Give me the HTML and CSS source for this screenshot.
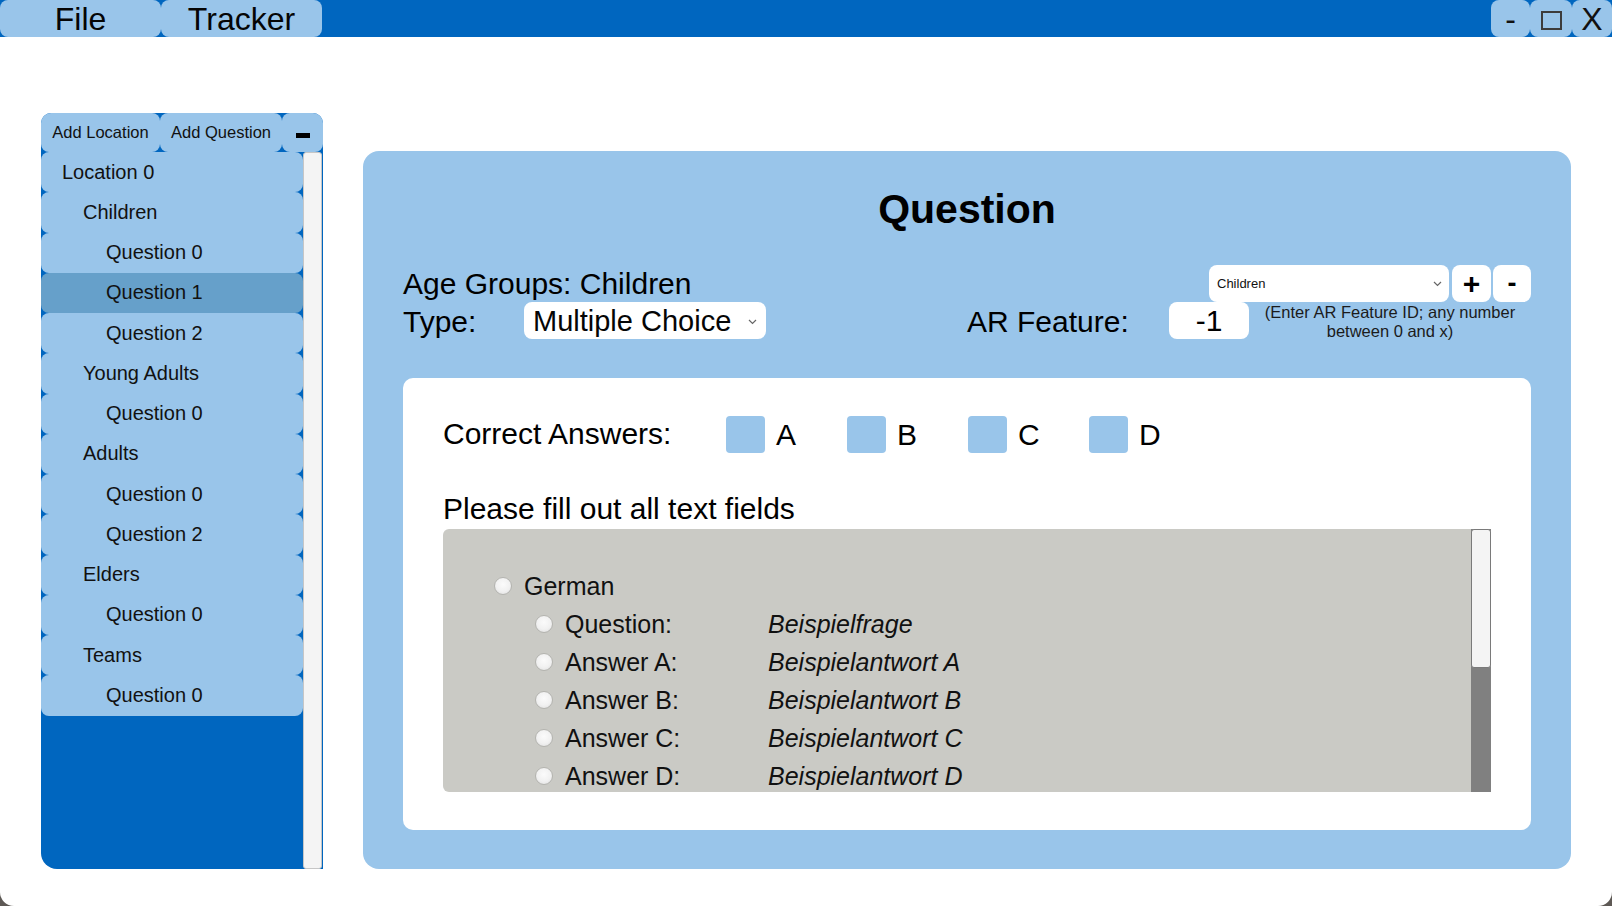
FILE: index.html
```html
<!DOCTYPE html>
<html lang="en">
<head>
<meta charset="utf-8">
<title>Tracker</title>
<link rel="stylesheet" href="styles.css">
</head>
<body>
<div class="window">
  <header class="titlebar">
    <nav class="menu">
      <div class="menu-btn">File</div>
      <div class="menu-btn">Tracker</div>
    </nav>
    <div class="win-controls">
      <div class="win-btn win-min">-</div>
      <div class="win-btn win-max"><span class="max-box"></span></div>
      <div class="win-btn win-close">X</div>
    </div>
  </header>

  <div class="workspace">
    <aside class="tree-panel">
      <div class="tree-toolbar">
        <div class="tool-btn tool-loc">Add Location</div>
        <div class="tool-btn tool-q">Add Question</div>
        <div class="tool-btn tool-minus"><span class="minus-bar"></span></div>
      </div>
      <div class="tree-body">
        <div class="tree-list">
          <div class="tree-item lvl0">Location 0</div>
          <div class="tree-item lvl1">Children</div>
          <div class="tree-item lvl2">Question 0</div>
          <div class="tree-item lvl2 selected">Question 1</div>
          <div class="tree-item lvl2">Question 2</div>
          <div class="tree-item lvl1">Young Adults</div>
          <div class="tree-item lvl2">Question 0</div>
          <div class="tree-item lvl1">Adults</div>
          <div class="tree-item lvl2">Question 0</div>
          <div class="tree-item lvl2">Question 2</div>
          <div class="tree-item lvl1">Elders</div>
          <div class="tree-item lvl2">Question 0</div>
          <div class="tree-item lvl1">Teams</div>
          <div class="tree-item lvl2">Question 0</div>
        </div>
        <div class="tree-scroll"></div>
      </div>
    </aside>

    <main class="question-panel">
      <h1 class="heading">Question</h1>
      <div class="meta">
        <div class="meta-row">
          <div class="big-label">Age Groups: Children</div>
          <div class="age-tools">
            <div class="small-select">
              <span>Children</span>
              <svg class="chev" width="9" height="6" viewBox="0 0 9 6"><polyline points="1,1 4.5,4.5 8,1" fill="none" stroke="#666" stroke-width="1.2"/></svg>
            </div>
            <div class="icon-btn plus">+</div>
            <div class="icon-btn minus">-</div>
          </div>
        </div>
        <div class="meta-row row2">
          <div class="big-label type-label">Type:</div>
          <div class="type-select">
            <span>Multiple Choice</span>
            <svg class="chev" width="9" height="6" viewBox="0 0 9 6"><polyline points="1,1 4.5,4.5 8,1" fill="none" stroke="#666" stroke-width="1.2"/></svg>
          </div>
          <div class="big-label ar-label">AR Feature:</div>
          <div class="ar-input">-1</div>
          <div class="hint">(Enter AR Feature ID; any number<br>between 0 and x)</div>
        </div>
      </div>

      <section class="card">
        <div class="answers">
          <div class="big-label answers-label">Correct Answers:</div>
          <div class="answer"><span class="checkbox"></span><span class="big-label">A</span></div>
          <div class="answer"><span class="checkbox"></span><span class="big-label">B</span></div>
          <div class="answer"><span class="checkbox"></span><span class="big-label">C</span></div>
          <div class="answer"><span class="checkbox"></span><span class="big-label">D</span></div>
        </div>
        <div class="instructions">Please fill out all text fields</div>
        <div class="lang-box">
          <div class="lang-content">
            <div class="lang-row lang-head"><span class="radio"></span><span>German</span></div>
            <div class="lang-row sub"><span class="radio"></span><span class="field-label">Question:</span><span class="field-value">Beispielfrage</span></div>
            <div class="lang-row sub"><span class="radio"></span><span class="field-label">Answer A:</span><span class="field-value">Beispielantwort A</span></div>
            <div class="lang-row sub"><span class="radio"></span><span class="field-label">Answer B:</span><span class="field-value">Beispielantwort B</span></div>
            <div class="lang-row sub"><span class="radio"></span><span class="field-label">Answer C:</span><span class="field-value">Beispielantwort C</span></div>
            <div class="lang-row sub"><span class="radio"></span><span class="field-label">Answer D:</span><span class="field-value">Beispielantwort D</span></div>
          </div>
          <div class="lang-scroll"><div class="lang-thumb"></div></div>
        </div>
      </section>
    </main>
  </div>
</div>
</body>
</html>
```

FILE: styles.css
```css
* { box-sizing: border-box; }

html, body {
  margin: 0;
  padding: 0;
}

body {
  background: #5e5955;
  font-family: "Liberation Sans", Arial, sans-serif;
  color: #000;
}

.window {
  width: 1612px;
  height: 906px;
  background: #fff;
  border-radius: 0 0 14px 14px;
  overflow: hidden;
  display: flex;
  flex-direction: column;
}

/* ---------- title bar ---------- */
.titlebar {
  flex: none;
  height: 37px;
  background: #0066bf;
  display: flex;
  justify-content: space-between;
}

.menu { display: flex; }

.menu-btn {
  width: 161px;
  height: 37px;
  background: #99c5ea;
  border-radius: 8px;
  font-size: 32px;
  line-height: 32px;
  display: flex;
  align-items: center;
  justify-content: center;
  color: #050505;
}

.win-controls { display: flex; }

.win-btn {
  height: 37px;
  background: #99c5ea;
  border-radius: 8px;
  font-size: 32px;
  line-height: 32px;
  display: flex;
  align-items: center;
  justify-content: center;
  color: #111;
}

.win-min { width: 39px; }
.win-max { width: 42px; }
.win-close { width: 40px; }

.max-box {
  width: 21px;
  height: 19px;
  border: 2px solid #3c3c3c;
  margin-top: 3px;
}

/* ---------- workspace ---------- */
.workspace {
  flex: 1;
  min-height: 0;
  display: flex;
  gap: 40px;
  padding: 76px 41px 37px 41px;
}

/* ---------- tree panel ---------- */
.tree-panel {
  flex: none;
  width: 282px;
  background: #0066bf;
  border-radius: 10px 10px 0 16px;
  display: flex;
  flex-direction: column;
  overflow: hidden;
}

.tree-toolbar {
  flex: none;
  height: 39px;
  display: flex;
}

.tool-btn {
  height: 39px;
  background: #99c5ea;
  border-radius: 8px;
  font-size: 16.5px;
  display: flex;
  align-items: center;
  justify-content: center;
  color: #111;
}

.tool-loc { width: 119px; }
.tool-q { width: 122px; }
.tool-minus { width: 41px; }

.minus-bar {
  width: 14px;
  height: 5px;
  background: #000;
  margin-top: 6px;
}

.tree-body {
  flex: 1;
  display: flex;
  min-height: 0;
}

.tree-list {
  flex: 1;
  display: flex;
  flex-direction: column;
}

.tree-item {
  height: 40.25px;
  flex: none;
  background: #99c5ea;
  border-radius: 8px;
  font-size: 20px;
  display: flex;
  align-items: center;
  color: #111;
}

.tree-item.lvl0 { padding-left: 21px; }
.tree-item.lvl1 { padding-left: 42px; }
.tree-item.lvl2 { padding-left: 65px; }
.tree-item.selected { background: #66a0ca; }

.tree-scroll {
  width: 19px;
  margin-right: 1px;
  background: #f4f4f4;
  border: 1px solid #c6c6c6;
  border-radius: 3px;
}

/* ---------- question panel ---------- */
.question-panel {
  flex: 1;
  min-height: 0;
  margin-top: 38px;
  background: #99c5ea;
  border-radius: 16px;
  padding: 34px 40px 39px;
  display: flex;
  flex-direction: column;
}

.heading {
  margin: 0;
  height: 48px;
  font-size: 41px;
  line-height: 48px;
  font-weight: bold;
  text-align: center;
}

.meta { margin-top: 32px; }

.meta-row {
  height: 37px;
  display: flex;
  align-items: center;
  justify-content: space-between;
}

.meta-row.row2 { justify-content: flex-start; }

.big-label {
  font-size: 30px;
  line-height: 37px;
  white-space: nowrap;
}

.row2 .big-label { padding-top: 2px; }

.age-tools {
  display: flex;
  gap: 3px;
}

.small-select {
  width: 240px;
  height: 37px;
  background: #fff;
  border-radius: 8px;
  padding: 0 7px 0 8px;
  font-size: 13px;
  display: flex;
  align-items: center;
  justify-content: space-between;
  color: #111;
}

.icon-btn {
  height: 37px;
  background: #fff;
  border-radius: 8px;
  font-weight: bold;
  display: flex;
  align-items: center;
  justify-content: center;
}

.icon-btn.plus { width: 39px; font-size: 30px; }
.icon-btn.minus { width: 38px; font-size: 27px; margin-left: -1px; }

.type-label { width: 121px; }

.type-select {
  width: 242px;
  height: 37px;
  background: #fff;
  border-radius: 8px;
  padding: 2px 9px 0 9px;
  font-size: 29px;
  display: flex;
  align-items: center;
  justify-content: space-between;
  color: #050505;
}

.type-select .chev { margin-top: 1px; }

.ar-label {
  margin-left: 201px;
  width: 202px;
}

.ar-input {
  width: 80px;
  height: 37px;
  background: #fff;
  border-radius: 8px;
  font-size: 30px;
  line-height: 37px;
  text-align: center;
}

.hint {
  flex: 1;
  padding-top: 3px;
  font-size: 16.5px;
  line-height: 19px;
  text-align: center;
  color: #1b1b1b;
}

/* ---------- card ---------- */
.card {
  flex: 1;
  min-height: 0;
  margin-top: 39px;
  background: #fff;
  border-radius: 10px;
  padding: 38px 40px;
  display: flex;
  flex-direction: column;
}

.answers {
  height: 37px;
  flex: none;
  display: flex;
  align-items: center;
}

.answers-label { width: 283px; padding-bottom: 3px; }

.answer {
  width: 121px;
  display: flex;
  align-items: center;
  gap: 11px;
}

.checkbox {
  width: 39px;
  height: 37px;
  background: #99c5ea;
  border-radius: 4px;
}

.instructions {
  flex: none;
  margin-top: 38px;
  font-size: 30px;
  line-height: 34px;
  height: 34px;
  padding-top: 1px;
}

.lang-box {
  flex: none;
  height: 263px;
  margin-top: 4px;
  background: #cacac5;
  border-radius: 6px 0 0 6px;
  display: flex;
  overflow: hidden;
}

.lang-content {
  flex: 1;
  padding-top: 38px;
  overflow: hidden;
}

.lang-row {
  height: 38px;
  display: flex;
  align-items: center;
  font-size: 25px;
  color: #111;
  white-space: nowrap;
}

.lang-head { padding-left: 51px; gap: 12px; }
.lang-row.sub { padding-left: 92px; }

.lang-row.sub .radio { margin-right: 12px; }

.radio {
  flex: none;
  width: 18px;
  height: 18px;
  border-radius: 50%;
  background: radial-gradient(circle at 50% 40%, #fbfbfb 0%, #f1f1f1 55%, #dcdcdc 100%);
  border: 1px solid #b4b4b0;
}

.field-label { width: 203px; }

.field-value { font-style: italic; }

.lang-scroll {
  flex: none;
  width: 20px;
  background: #808080;
}

.lang-thumb {
  height: 139px;
  background: #f4f4f4;
  border: 1px solid #7a7a7a;
  border-radius: 3px;
}
```
